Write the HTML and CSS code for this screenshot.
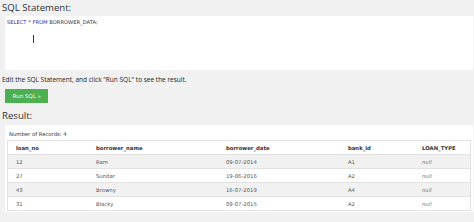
FILE: index.html
```html
<!DOCTYPE html>
<html lang="en">
<head>
  <meta charset="UTF-8" />
  <title>SQL Tryit</title>
  <link rel="stylesheet" href="styles.css">
</head>
<body>
  <h2 class="heading">SQL Statement:</h2>
  <div class="editor">
    <div class="code"><span class="kw">SELECT</span> * <span class="kw">FROM</span> BORROWER_DATA;</div>
    <div class="caret"></div>
  </div>

  <p class="hint">Edit the SQL Statement, and click "Run SQL" to see the result.</p>
  <button class="run-btn">Run SQL &raquo;</button>

  <h2 class="heading result-heading">Result:</h2>
  <div class="result">
    <div class="records">Number of Records: 4</div>
    <table class="grid">
      <tr>
        <th class="c1">loan_no</th>
        <th class="c2">borrower_name</th>
        <th class="c3">borrower_date</th>
        <th class="c4">bank_id</th>
        <th class="c5">LOAN_TYPE</th>
      </tr>
      <tr><td>12</td><td>Ram</td><td>09-07-2014</td><td>A1</td><td><i>null</i></td></tr>
      <tr><td>27</td><td>Sundar</td><td>19-06-2016</td><td>A2</td><td><i>null</i></td></tr>
      <tr><td>43</td><td>Browny</td><td>16-07-2019</td><td>A4</td><td><i>null</i></td></tr>
      <tr><td>31</td><td>Blacky</td><td>09-07-2015</td><td>A2</td><td><i>null</i></td></tr>
    </table>
  </div>
</body>
</html>
```

FILE: styles.css
```css
html, body {
  margin: 0;
  padding: 0;
  background: #f1f1f1;
  font-family: "Open Sans", "DejaVu Sans", sans-serif;
  color: #000;
}

body {
  padding: 0 1px 0 5px;
  overflow: hidden;
}

.heading {
  margin: 0 0 0 -3px;
  font-weight: 400;
  font-size: 9.6px;
  line-height: 16px;
  color: #333;
}

.editor {
  position: relative;
  background: #fff;
  height: 54px;
  padding: 3px 2px;
  box-sizing: border-box;
}

.code {
  font-family: "DejaVu Sans", sans-serif;
  font-size: 5.2px;
  line-height: 6px;
  color: #333;
}

.code .kw {
  color: #2a2aa8;
}

.caret {
  position: absolute;
  left: 28px;
  top: 19px;
  width: 1px;
  height: 8px;
  background: #333;
}

.hint {
  margin: 5px 0 0 -3px;
  font-size: 6.5px;
  line-height: 9px;
  color: #222;
}

.run-btn {
  display: block;
  margin: 5px 0 0 0;
  width: 43px;
  height: 14px;
  padding: 0;
  border: none;
  background: #4caf50;
  color: #fff;
  font-family: "Open Sans", sans-serif;
  font-size: 6px;
  text-align: center;
}

.result-heading {
  margin-top: 5px;
  line-height: 16px;
}

.result {
  background: #fff;
  margin-top: 1px;
  padding: 3px 2px 4px 2px;
  height: 87px;
  box-sizing: border-box;
}

.records {
  font-family: "DejaVu Sans", sans-serif;
  font-size: 5.3px;
  line-height: 12px;
  padding-left: 2px;
  color: #333;
}

.grid {
  width: 100%;
  border-collapse: collapse;
  border: 1px solid #e2e2e2;
  font-family: "DejaVu Sans", sans-serif;
  font-size: 5.3px;
  color: #555;
}

.grid th, .grid td {
  text-align: left;
  padding: 0 0 0 8px;
  height: 13px;
  border-bottom: 1px solid #e2e2e2;
}

.grid th {
  font-weight: 700;
  color: #333;
}

.grid tr:nth-child(even) {
  background: #f1f1f1;
}

.grid i {
  color: #777;
}

.c1 { width: 72px; }
.c2 { width: 122px; }
.c3 { width: 114px; }
.c4 { width: 66px; }
```
